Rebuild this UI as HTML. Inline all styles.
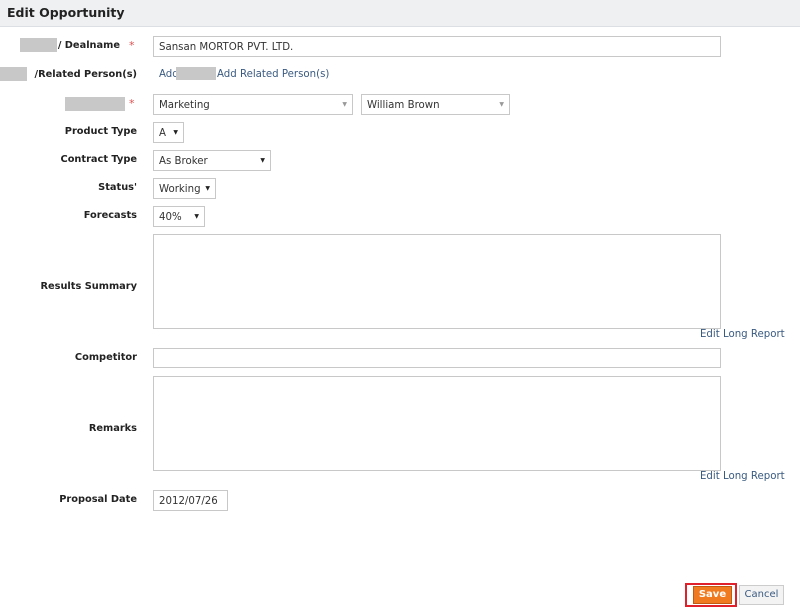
<!DOCTYPE html>
<html><head><style>
body{margin:0;width:800px;height:607px;background:#fff;font-family:"DejaVu Sans","Liberation Sans",sans-serif;position:relative;overflow:hidden;color:#333}
.hdr{position:absolute;left:0;top:0;width:800px;height:26px;background:#eef0f2;border-bottom:1px solid #dcdfe3}
.hdr span{position:absolute;left:7px;top:5px;font-size:12.5px;font-weight:bold;color:#222}
.lbl{position:absolute;right:663px;font-size:9.8px;font-weight:bold;color:#222;white-space:nowrap}
.lbl.s{right:680px}
.star{position:absolute;left:129px;color:#e05050;font-size:11px}
.box{position:absolute;border:1px solid #c8c8c8;background:#fff;font-size:10.2px;color:#333;box-sizing:border-box;padding:5px 5px 0;white-space:nowrap}
.arr{position:absolute;right:5px;top:6px;font-size:6px;color:#222}
.arrg{color:#999}
.gray{position:absolute;background:#c8c8c8}
.link{position:absolute;font-size:10.2px;color:#3a5a80}
</style></head><body>
<div class="hdr"><span>Edit Opportunity</span></div>

<div class="gray" style="left:20px;top:38px;width:37px;height:14px"></div>
<div class="lbl s" style="top:40px">/ Dealname</div><div class="star" style="top:39px">*</div>
<div class="box" style="left:153px;top:36px;width:568px;height:21px">Sansan MORTOR PVT. LTD.</div>

<div class="gray" style="left:0;top:67px;width:27px;height:14px"></div>
<div class="lbl" style="top:69px">/Related Person(s)</div>
<div class="link" style="left:159px;top:69px">Add</div>
<div class="gray" style="left:176px;top:67px;width:40px;height:13px"></div>
<div class="link" style="left:217px;top:69px">Add Related Person(s)</div>

<div class="gray" style="left:65px;top:97px;width:60px;height:14px"></div><div class="star" style="top:97px">*</div>
<div class="box" style="left:153px;top:94px;width:200px;height:21px">Marketing<span class="arr arrg">▼</span></div>
<div class="box" style="left:361px;top:94px;width:149px;height:21px">William Brown<span class="arr arrg">▼</span></div>

<div class="lbl" style="top:126px">Product Type</div>
<div class="box" style="left:153px;top:122px;width:31px;height:21px">A<span class="arr">▼</span></div>
<div class="lbl" style="top:154px">Contract Type</div>
<div class="box" style="left:153px;top:150px;width:118px;height:21px">As Broker<span class="arr">▼</span></div>
<div class="lbl" style="top:182px">Status'</div>
<div class="box" style="left:153px;top:178px;width:63px;height:21px">Working<span class="arr">▼</span></div>
<div class="lbl" style="top:210px">Forecasts</div>
<div class="box" style="left:153px;top:206px;width:52px;height:21px">40%<span class="arr">▼</span></div>

<div class="lbl" style="top:281px">Results Summary</div>
<div class="box" style="left:153px;top:234px;width:568px;height:95px"></div>
<div class="link" style="left:700px;top:329px">Edit Long Report</div>

<div class="lbl" style="top:352px">Competitor</div>
<div class="box" style="left:153px;top:348px;width:568px;height:20px"></div>

<div class="lbl" style="top:423px">Remarks</div>
<div class="box" style="left:153px;top:376px;width:568px;height:95px"></div>
<div class="link" style="left:700px;top:471px">Edit Long Report</div>

<div class="lbl" style="top:494px">Proposal Date</div>
<div class="box" style="left:153px;top:490px;width:75px;height:21px">2012/07/26</div>

<div style="position:absolute;left:685px;top:583px;width:52px;height:24px;border:2px solid #e0202a;box-sizing:border-box"></div>
<div style="position:absolute;left:693px;top:586px;width:39px;height:18px;background:#f07a20;border:1px solid #c05a10;box-sizing:border-box;color:#fff;font-size:10px;font-weight:bold;text-align:center;line-height:16px">Save</div>
<div style="position:absolute;left:739px;top:585px;width:45px;height:20px;background:#f3f3f3;border:1px solid #ccc;box-sizing:border-box;color:#3a5a80;font-size:10px;text-align:center;line-height:18px">Cancel</div>
</body></html>
